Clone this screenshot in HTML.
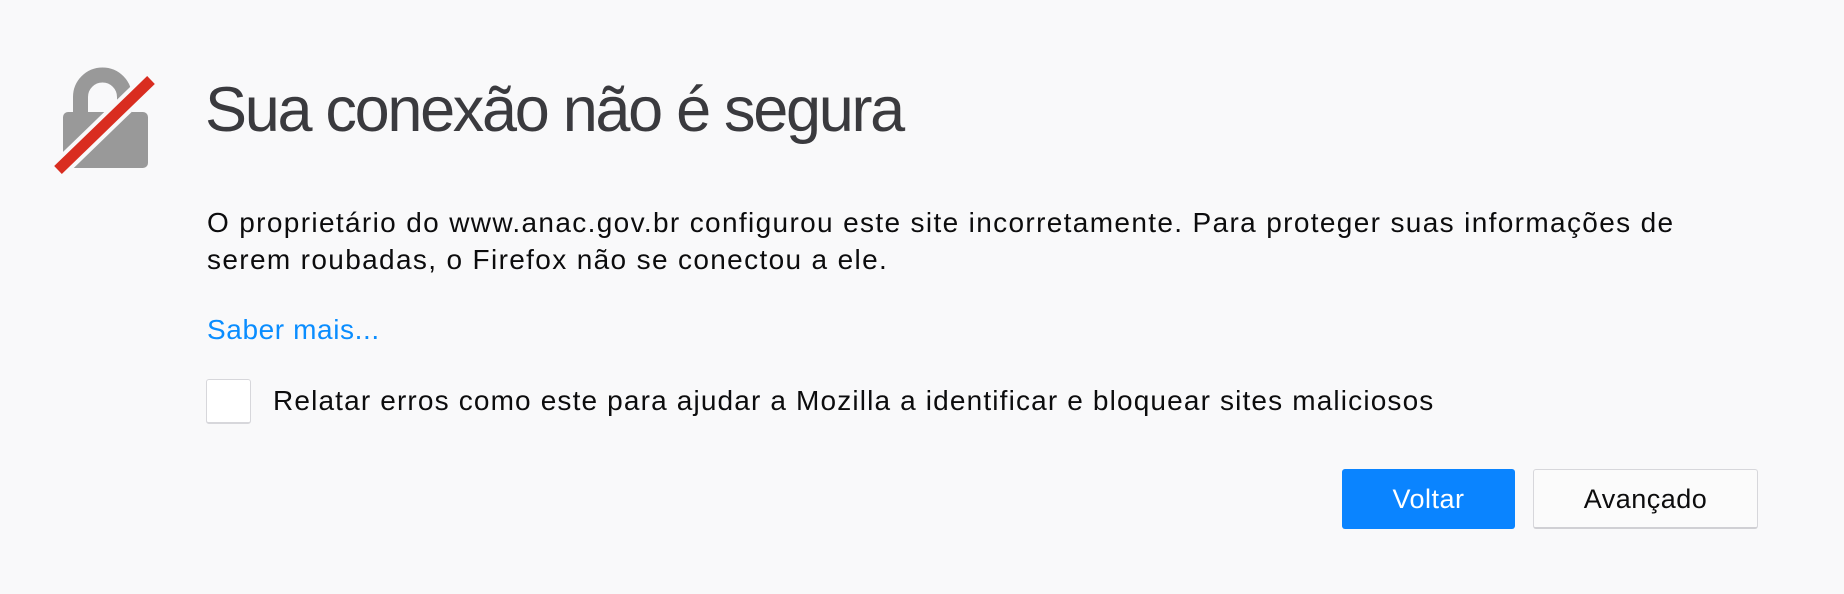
<!DOCTYPE html>
<html><head><meta charset="utf-8"><style>
html,body{margin:0;padding:0;background:#f9f9fa;width:1844px;height:594px;overflow:hidden;font-family:"Liberation Sans",sans-serif;}
.abs{position:absolute;white-space:nowrap;}
h1{position:absolute;left:205px;top:79px;margin:0;font-weight:normal;font-size:63px;color:#3a3a3e;letter-spacing:-2.3px;line-height:1;}
.p{left:207px;font-size:28px;color:#0c0c0d;letter-spacing:1.35px;}
.btn{position:absolute;top:469px;height:60px;box-sizing:border-box;border-radius:3px;font-size:27px;text-align:center;line-height:60px;letter-spacing:0.5px;}
</style></head><body>
<svg class="abs" style="left:0;top:0" width="200" height="200" viewBox="0 0 200 200">
  <path d="M80.5 112 V97 A22 22 0 0 1 124.5 97 V112" fill="none" stroke="#999" stroke-width="15"/>
  <rect x="63" y="112" width="85" height="56" rx="5" fill="#999"/>
  <line x1="58" y1="170" x2="151" y2="80" stroke="#f9f9fa" stroke-width="19"/>
  <line x1="58" y1="170" x2="151" y2="80" stroke="#d92d20" stroke-width="11"/>
</svg>
<h1>Sua conexão não é segura</h1>
<div class="abs p" style="top:207px">O proprietário do www.anac.gov.br configurou este site incorretamente. Para proteger suas informações de</div>
<div class="abs p" style="top:244px">serem roubadas, o Firefox não se conectou a ele.</div>
<div class="abs p" style="top:314px;color:#0a8dff;letter-spacing:0.6px">Saber mais...</div>
<div class="abs" style="left:206px;top:379px;width:45px;height:45px;box-sizing:border-box;border:1px solid #d7d7db;border-bottom:2px solid #d7d7db;border-radius:3px;background:#fff"></div>
<div class="abs p" style="left:273px;top:385px;letter-spacing:1.15px">Relatar erros como este para ajudar a Mozilla a identificar e bloquear sites maliciosos</div>
<div class="btn" style="left:1342px;width:173px;background:#0a84ff;color:#fff">Voltar</div>
<div class="btn" style="left:1533px;width:225px;background:#fbfbfb;border:1px solid #d7d7db;border-bottom:2px solid #d0d0d4;color:#0c0c0d;line-height:58px">Avançado</div>
</body></html>
